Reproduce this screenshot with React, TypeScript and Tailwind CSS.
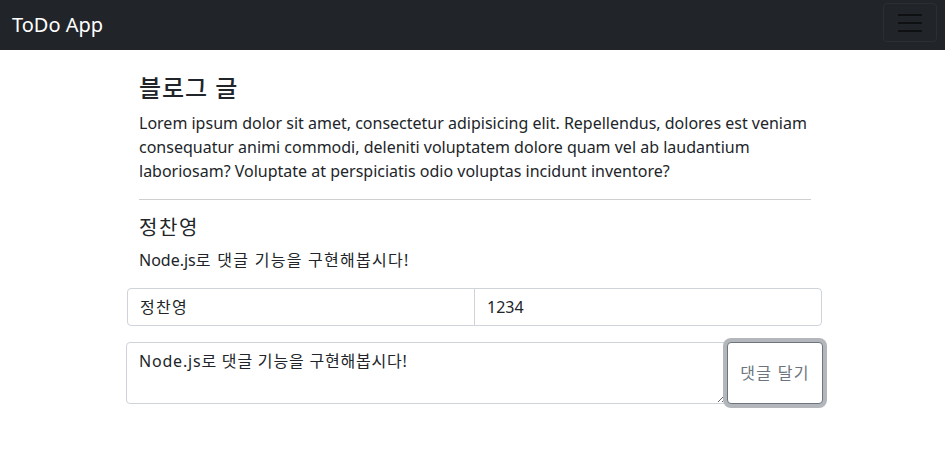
const font = {
  fontFamily: '"Noto Sans", "Noto Sans CJK KR", sans-serif',
};

function Navbar() {
  return (
    <nav className="flex h-[50px] items-center justify-between bg-[#212529] pl-3 pr-2">
      <span className="text-[20px] leading-[30px] text-white">ToDo App</span>
      <button
        type="button"
        className="mb-[5px] flex h-[39px] w-[54px] flex-col items-center justify-center gap-[6px] rounded-[4px] border border-[#2b2f33]"
      >
        <span className="block h-[2px] w-6 bg-[#0e1012]" />
        <span className="block h-[2px] w-6 bg-[#0e1012]" />
        <span className="block h-[2px] w-6 bg-[#0e1012]" />
      </button>
    </nav>
  );
}

export default function App() {
  return (
    <div className="min-h-[453px] bg-white text-[#212529]" style={font}>
      <Navbar />
      <main className="ml-[127px] w-[696px]">
        <section className="px-3 pt-6">
          <h4 className="mb-2 text-[24px] leading-[1.2] font-medium tracking-[0.04em]">블로그 글</h4>
          <p className="mb-4 text-base leading-6">
            Lorem ipsum dolor sit amet, consectetur adipisicing elit. Repellendus, dolores est
            veniam consequatur animi commodi, deleniti voluptatem dolore quam vel ab laudantium
            laboriosam? Voluptate at perspiciatis odio voluptas incidunt inventore?
          </p>
          <hr className="border-t border-[#cfcfcf]" />
          <h5 className="mt-4 mb-2 text-[20px] leading-[1.2] tracking-[0.08em]">정찬영</h5>
          <p className="mb-4 text-base leading-6">
            Node.js<span className="tracking-[0.08em]">로 댓글 기능을 구현해봅시다!</span>
          </p>
        </section>

        <form className="flex flex-col gap-4">
          <div className="flex h-[38px]">
            <input
              defaultValue="정찬영"
              className="w-1/2 rounded-l-[4px] border border-[#ced4da] px-3 text-base tracking-[0.08em] outline-none"
            />
            <input
              defaultValue="1234"
              className="-ml-px w-1/2 rounded-r-[4px] border border-[#ced4da] px-3 text-base outline-none"
            />
          </div>
          <div className="flex h-[62px]">
            <textarea
              defaultValue="Node.js로 댓글 기능을 구현해봅시다!"
              className="-ml-px flex-1 rounded-l-[4px] border border-[#ced4da] px-3 py-[6px] text-base leading-6 tracking-[0.05em] outline-none"
            />
            <button
              type="button"
              className="w-[96px] rounded-[4px] border border-[#6c757d] bg-white text-base tracking-[0.08em] text-[#6c757d] shadow-[0_0_0_4px_#b3b7bb]"
            >
              댓글 달기
            </button>
          </div>
        </form>
      </main>
    </div>
  );
}
